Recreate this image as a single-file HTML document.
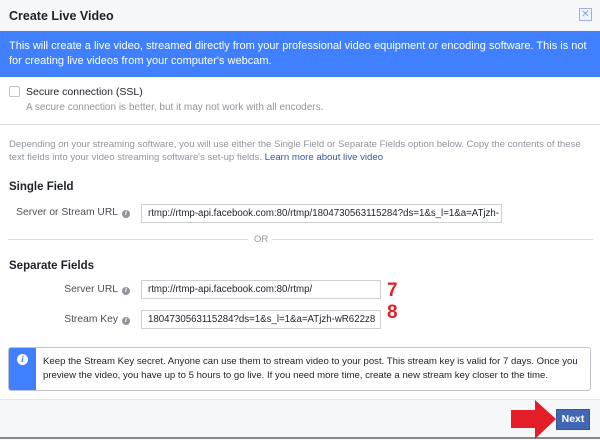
<!DOCTYPE html><html><head><style>
body{margin:0;width:600px;height:439px;overflow:hidden;background:#fff;font-family:"Liberation Sans",Arial,sans-serif;position:relative}
.a{position:absolute;white-space:nowrap}
.inp{position:absolute;border:1px solid #ccd0d5;background:#fff;font-size:9.7px;color:#1d2129;padding-left:6px;box-sizing:border-box;line-height:17px;overflow:hidden;white-space:nowrap}
.lbl{position:absolute;font-size:10.3px;color:#4b4f56;text-align:right;white-space:nowrap}
.i{display:inline-block;width:8px;height:8px;border-radius:50%;background:#90949c;color:#fff;font-size:7px;line-height:8px;text-align:center;font-style:italic;font-weight:bold;margin-left:4px;vertical-align:0}
</style></head><body>
<div class="a" style="left:0;top:0;width:600px;height:31px;background:#f6f7f9;border-bottom:1px solid #e5e5e5"></div>
<div class="a" style="left:9px;top:9px;font-size:12.5px;font-weight:bold;color:#1d2129">Create Live Video</div>
<div class="a" style="left:579px;top:8px;width:11px;height:11px;border:1px solid #9fb3d8;background:#eef2fa;color:#8aa0c8;font-size:10px;line-height:11px;text-align:center">✕</div>
<div class="a" style="left:0;top:31px;width:600px;height:46px;background:#4080ff"></div>
<div class="a" style="left:9px;top:39px;font-size:11px;color:#fff;line-height:14.5px;white-space:normal;width:590px">This will create a live video, streamed directly from your professional video equipment or encoding software. This is not for creating live videos from your computer's webcam.</div>
<div class="a" style="left:9px;top:86px;width:11px;height:11px;border:1px solid #bec3c9;border-radius:2px;box-sizing:border-box"></div>
<div class="a" style="left:26px;top:86px;font-size:10.5px;color:#1d2129">Secure connection (SSL)</div>
<div class="a" style="left:26px;top:102px;font-size:10px;color:#90949c">A secure connection is better, but it may not work with all encoders.</div>
<div class="a" style="left:0;top:124px;width:600px;height:1px;background:#dddfe2"></div>
<div class="a" style="left:9px;top:139px;font-size:9.6px;color:#90949c;line-height:12.5px;white-space:normal;width:585px">Depending on your streaming software, you will use either the Single Field or Separate Fields option below. Copy the contents of these text fields into your video streaming software's set-up fields. <span style="color:#365899">Learn more about live video</span></div>
<div class="a" style="left:9px;top:181px;font-size:11.5px;font-weight:bold;color:#1d2129">Single Field</div>
<div class="lbl" style="right:470px;top:207px">Server or Stream URL<span class="i">i</span></div>
<div class="inp" style="left:141px;top:204px;width:361px;height:19px">rtmp://rtmp-api.facebook.com:80/rtmp/1804730563115284?ds=1&amp;s_l=1&amp;a=ATjzh-</div>
<div class="a" style="left:8px;top:239px;width:240px;height:1px;background:#dddfe2"></div>
<div class="a" style="left:272px;top:239px;width:321px;height:1px;background:#dddfe2"></div>
<div class="a" style="left:254px;top:234px;font-size:9.5px;color:#90949c">OR</div>
<div class="a" style="left:9px;top:260px;font-size:11.5px;font-weight:bold;color:#1d2129">Separate Fields</div>
<div class="lbl" style="right:470px;top:284px">Server URL<span class="i">i</span></div>
<div class="inp" style="left:141px;top:280px;width:240px;height:19px">rtmp://rtmp-api.facebook.com:80/rtmp/</div>
<div class="lbl" style="right:470px;top:314px">Stream Key<span class="i">i</span></div>
<div class="inp" style="left:141px;top:310px;width:240px;height:19px">1804730563115284?ds=1&amp;s_l=1&amp;a=ATjzh-wR622z8</div>
<div class="a" style="left:387px;top:280px;font-size:19px;font-weight:bold;color:#e0202a">7</div>
<div class="a" style="left:387px;top:302px;font-size:19px;font-weight:bold;color:#e0202a">8</div>
<div class="a" style="left:8px;top:347px;width:583px;height:44px;border:1px solid #bec3c9;border-radius:3px;box-sizing:border-box;overflow:hidden;white-space:normal">
<div style="position:absolute;left:0;top:0;width:27px;height:44px;background:#4080ff"></div>
<div style="position:absolute;left:8px;top:6px;width:11px;height:11px;border-radius:50%;background:#fff;color:#4080ff;font-size:9px;line-height:11px;text-align:center;font-style:italic;font-weight:bold;font-family:'Liberation Serif',serif">i</div>
<div style="position:absolute;left:34px;top:7px;font-size:9.6px;line-height:14px;color:#1d2129;width:545px;white-space:normal">Keep the Stream Key secret. Anyone can use them to stream video to your post. This stream key is valid for 7 days. Once you preview the video, you have up to 5 hours to go live. If you need more time, create a new stream key closer to the time.</div></div>
<div class="a" style="left:0;top:399px;width:600px;height:40px;background:#f6f7f9;border-top:1px solid #e5e5e5"></div>
<div class="a" style="left:0;top:437px;width:600px;height:2px;background:#888"></div>
<div class="a" style="left:556px;top:409px;width:34px;height:21px;background:#4267b2;border:1px solid #365899;box-sizing:border-box;color:#fff;font-size:10.5px;font-weight:bold;text-align:center;line-height:19px">Next</div>
<svg class="a" style="left:511px;top:400px" width="46" height="39"><polygon points="0,10 24,10 24,0 45,19 24,39 24,28 0,28" fill="#e41e26"/></svg>
</body></html>
